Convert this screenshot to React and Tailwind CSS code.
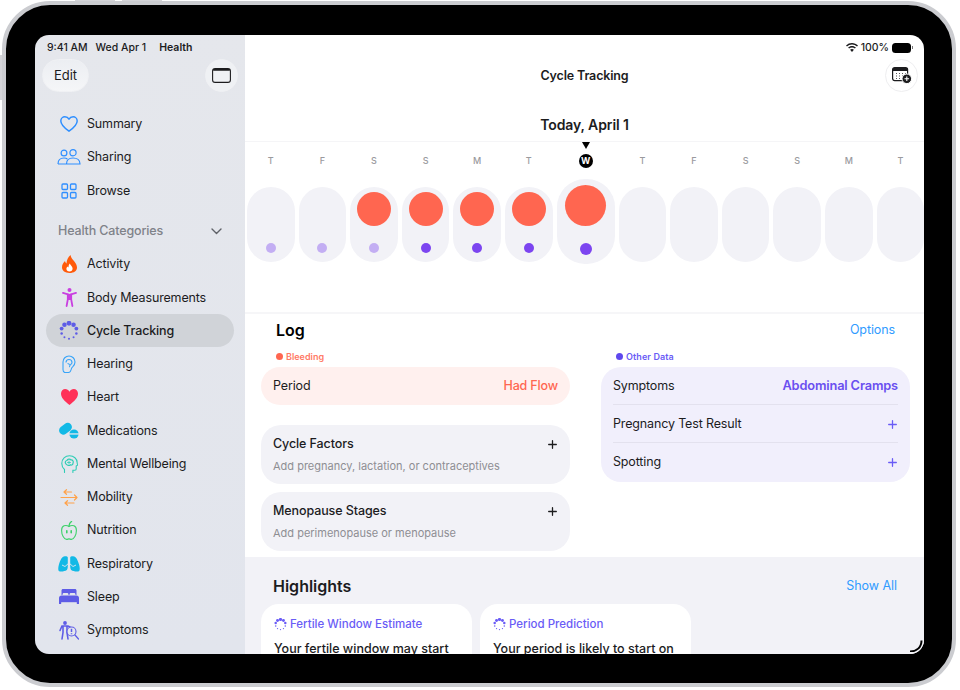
const days = [
  { l: "T", dot: "light" },
  { l: "F", dot: "light" },
  { l: "S", dot: "light", flow: true },
  { l: "S", dot: "dark", flow: true },
  { l: "M", dot: "dark", flow: true },
  { l: "T", dot: "dark", flow: true },
  { l: "W", dot: "dark", flow: true, today: true },
  { l: "T" },
  { l: "F" },
  { l: "S" },
  { l: "S" },
  { l: "M" },
  { l: "T" },
];

function Spinner({ size = 20, color = "#6a5cf6" }) {
  // big dots on top, small ticks on the bottom
  const dots = [
    [0, 2.9], [36, 2.7], [72, 2.3], [108, 1.5], [144, 1.2],
    [180, 1.2], [216, 1.2], [252, 1.5], [288, 2.3], [324, 2.7],
  ];
  return (
    <svg width={size} height={size} viewBox="0 0 24 24" fill={color}>
      {dots.map(([a, r]) => (
        <circle
          key={a}
          cx={12 + 9.3 * Math.sin((a * Math.PI) / 180)}
          cy={12 - 9.3 * Math.cos((a * Math.PI) / 180)}
          r={r}
        />
      ))}
    </svg>
  );
}

const HeartPath = "M12 21C6 16.6 2 13 2 8.2 2 5 4.4 3 7 3c2 0 3.9 1 5 3 1.1-2 3-3 5-3 2.600 0 5 2 5 5.200C22 13 18 16.6 12 21Z";

const icons = {
  summary: (
    <svg width="18" height="16" viewBox="1 2 22 20" fill="none" stroke="#2f8fff" strokeWidth="1.8" strokeLinejoin="round" preserveAspectRatio="none">
      <path d={HeartPath} />
    </svg>
  ),
  sharing: (
    <svg width="24" height="16" viewBox="0 0 24 16" fill="none" stroke="#2f8fff" strokeWidth="1.2">
      <circle cx="7" cy="4" r="2.9" />
      <circle cx="16" cy="3.7" r="3.1" />
      <path d="M1 15c0-4 2.500-6 6-6 1.400 0 2.500.3 3.400 1" />
      <path d="M1 15h8.500M9.500 15c0-3.800 2.500-6 6.500-6s7 2.200 7 6Z" />
    </svg>
  ),
  browse: (
    <svg width="16" height="16" viewBox="0 0 16 16" fill="none" stroke="#2f8fff" strokeWidth="1.3">
      <rect x="1" y="1" width="5.5" height="5.5" rx="1" />
      <rect x="9.5" y="1" width="5.5" height="5.5" rx="1" />
      <rect x="1" y="9.5" width="5.5" height="5.5" rx="1" />
      <rect x="9.5" y="9.5" width="5.5" height="5.5" rx="1" />
    </svg>
  ),
  activity: (
    <svg width="15" height="18" viewBox="0 0 15 18">
      <path d="M8.500 0c.6 3 2 4 3.500 6 1.500 2 3 4 3 6.500C15 15.800 12 18 7.500 18S0 15.800 0 12.300C0 9.500 1.500 7.500 3 6c.2 1 .6 1.800 1.500 2.500C4.700 5 6 2 8.500 0Z" fill="#ff5a0a" />
      <path d="M7.700 8.500c.4 1.500 2.900 2.600 2.900 5.100 0 1.900-1.300 3-3.100 3s-3.100-1.100-3.100-2.800c0-1 .6-1.800 1.200-2.400.2.500.4.800.8 1 .1-1.500.5-2.800 1.300-3.900Z" fill="#fff" />
    </svg>
  ),
  body: (
    <svg width="15" height="19" viewBox="0 0 15 19" fill="none" stroke="#c93fe0" strokeLinecap="round">
      <circle cx="7.5" cy="2" r="2" fill="#c93fe0" stroke="none" />
      <path d="M1 4.800 7.500 6.800l6.500-2" strokeWidth="1.8" />
      <path d="M5.800 6.500v5L4.600 18M9.200 6.500v5l1.200 6.500" strokeWidth="1.8" />
      <path d="M6 7h3v4.500H6Z" fill="#c93fe0" strokeWidth="1" />
    </svg>
  ),
  cycle: <Spinner size={20} color="#5e5ce6" />,
  hearing: (
    <svg width="14" height="18" viewBox="0 0 14 18" fill="none" stroke="#38a4f8" strokeWidth="1.1">
      <path d="M2.500 17.300C1.500 17 1 16 1 14.500V7a6 6 0 0 1 12 0c0 2.200-1 3.500-2.200 4.700-1.200 1.100-1.500 2-1.800 3.300-.4 1.600-1.200 2.500-2.500 2.500H2.500Z" />
      <path d="M4 7.500a3 3 0 1 1 6 0c0 1.500-1.300 1.800-2 2.800-.4.600-.3 1.400-.8 1.700" />
      <path d="M5.500 8.500c1 0 1.800.5 2 1.500" />
    </svg>
  ),
  heart: (
    <svg width="17" height="16" viewBox="2 3 20 18" fill="#ff3158" preserveAspectRatio="none">
      <path d={HeartPath} />
    </svg>
  ),
  meds: (
    <svg width="20" height="17" viewBox="0 0 20 17">
      <rect x="-.5" y="2.500" width="14" height="8.500" rx="4.250" fill="#12b9e6" transform="rotate(-38 6.500 6.750)" />
      <circle cx="15" cy="12" r="4.600" fill="#12b9e6" />
      <rect x="10" y="11.300" width="10" height="1.300" fill="#e4e7ed" />
    </svg>
  ),
  mental: (
    <svg width="17" height="18" viewBox="0 0 17 18" fill="none" stroke="#2fcdb6" strokeWidth="1.1" strokeLinecap="round">
      <path d="M3.500 17.500v-3C1.800 13 .8 11 .8 8.500.8 3.700 4.300.8 8.500.8c4.200 0 7.700 2.800 7.700 7 0 1 .1 1.500.5 2.200l-1.500 1v3c0 .8-.5 1.200-1.300 1.200h-2v2.300" />
      <path d="M5 9c-1.500-1.500-.5-3.500 1-3.500C6.500 4 9 3.500 10 5c1.500-.3 3 1.500 2 3 .3 1.500-1.500 2.500-2.500 1.800C8.500 11 6 10.500 5 9Z" strokeWidth="1.2" />
      <path d="M6.500 7.500h3M8 6v3" strokeWidth=".8" />
    </svg>
  ),
  mobility: (
    <svg width="18" height="17" viewBox="0 0 18 17" fill="none" stroke="#ffa24a" strokeWidth="1.2" strokeLinecap="round" strokeLinejoin="round">
      <path d="M4 3h7.500M6.500 .7 4 3l2.500 2.300" />
      <path d="M1 8.500h16M14.500 6l2.500 2.500-2.500 2.500" />
      <path d="M5 14h9M7.500 11.700 5 14l2.500 2.300" />
    </svg>
  ),
  nutrition: (
    <svg width="16" height="19" viewBox="0 0 16 19" fill="none" stroke="#3dd16a" strokeWidth="1.1">
      <path d="M8 5.500C6.500 4.500 4.500 4.200 3 4.800 1.300 5.500.6 7.200.6 9.500c0 4.300 2.400 8.900 5 8.900 1 0 1.600-.5 2.400-.5s1.400.5 2.400.5c2.600 0 5-4.600 5-8.900 0-2.300-.7-4-2.400-4.700-1.500-.6-3.500-.3-5 .7Z" />
      <path d="M8 5c0-2 1-3.500 2.500-4.500" strokeWidth="1.4" strokeLinecap="round" />
      <rect x="5" y="9" width="1.6" height="3.5" rx=".8" fill="#3dd16a" stroke="none" />
      <rect x="9.4" y="9" width="1.6" height="3.5" rx=".8" fill="#3dd16a" stroke="none" />
    </svg>
  ),
  respiratory: (
    <svg width="22" height="16" viewBox="0 0 22 16">
      <path d="M6 .5C3.500 1 2 5 .8 9 .2 11.500 0 14 .8 15c1.500 1 6 .5 8-1 1-1 1-3 1-5.500V1.500C9.800 .5 7.500 0 6 .5Z" fill="#12b9e6" />
      <path d="M16 .5c2.500.5 4 4.500 5.200 8.500.6 2.500.8 5 0 6-1.500 1-6 .5-8-1-1-1-1-3-1-5.500V1.500c0-1 2.300-1.500 3.800-1Z" fill="#12b9e6" />
      <path d="M11 0v7M11 7 7 10.500M11 7l4 3.500M4 9l3 1.500M18 9l-3 1.500" stroke="#e4e7ed" strokeWidth=".9" fill="none" />
    </svg>
  ),
  sleep: (
    <svg width="20" height="15" viewBox="0 0 20 15" fill="#5e5ce6">
      <path d="M2.500 1.500C2.500.7 3.200 0 4 0h12c.8 0 1.500.7 1.500 1.500V6h-1c0-1.500-.5-2-1.500-2h-3c-1 0-1.500.5-1.500 2h-1C9.500 4.500 9 4 8 4H5c-1 0-1.500.5-1.500 2h-1Z" />
      <path d="M2.500 6.500h15C19 6.500 20 7.500 20 9v3H0V9c0-1.500 1-2.500 2.500-2.500Z" />
      <rect x="0" y="12" width="2.2" height="3" rx=".5" />
      <rect x="17.800" y="12" width="2.2" height="3" rx=".5" />
      <rect x="0" y="12" width="20" height="1.2" />
    </svg>
  ),
  symptoms: (
    <svg width="20" height="19" viewBox="0 0 20 19" fill="none" stroke="#5e5ce6">
      <circle cx="6" cy="2" r="1.900" fill="#5e5ce6" stroke="none" />
      <path d="M1 9.500 3 5h6l2 1M4 5v6.500L3 18M8 5v6.500L9 18" strokeWidth="1.6" strokeLinecap="round" />
      <circle cx="12.5" cy="10.5" r="4.5" fill="#e4e7ed" strokeWidth="1.1" />
      <path d="M12.500 7.800v3.200M12.500 12.200v1" strokeWidth="1.5" />
      <path d="m16 14 3.500 4" strokeWidth="1.2" strokeLinecap="round" />
    </svg>
  ),
};

const topNav = [
  { name: "Summary", icon: "summary" },
  { name: "Sharing", icon: "sharing" },
  { name: "Browse", icon: "browse" },
];

const categories = [
  { name: "Activity", icon: "activity" },
  { name: "Body Measurements", icon: "body" },
  { name: "Cycle Tracking", icon: "cycle", active: true },
  { name: "Hearing", icon: "hearing" },
  { name: "Heart", icon: "heart" },
  { name: "Medications", icon: "meds" },
  { name: "Mental Wellbeing", icon: "mental" },
  { name: "Mobility", icon: "mobility" },
  { name: "Nutrition", icon: "nutrition" },
  { name: "Respiratory", icon: "respiratory" },
  { name: "Sleep", icon: "sleep" },
  { name: "Symptoms", icon: "symptoms" },
];

function NavItem({ item }) {
  return (
    <div
      className={`flex h-[33.27px] shrink-0 items-center gap-[6px] rounded-full pl-[11px] text-[12.5px] tracking-[-0.15px] text-[#1c1c1e] ${
        item.active ? "bg-[#d0d3d8] font-medium" : ""
      }`}
    >
      <span className="flex w-[24px] shrink-0 items-center justify-center">
        {icons[item.icon]}
      </span>
      <span className="pt-px">{item.name}</span>
    </div>
  );
}

function Sidebar() {
  return (
    <aside className="flex w-[210px] shrink-0 flex-col bg-gradient-to-b from-[#e5e7ec] to-[#e2e5ed] px-[11px]">
      <div className="-mx-[11px] flex h-[24px] shrink-0 items-center pl-[12px] pt-px text-[10.5px] font-medium text-[#1c1c1e]">
        <span>9:41 AM</span>
        <span className="ml-[8px]">Wed Apr 1</span>
        <span className="ml-[13px] font-semibold">Health</span>
      </div>

      <div className="-mx-[4px] flex h-[33px] shrink-0 items-center justify-between">
        <div className="flex h-[33px] w-[47px] items-center justify-center rounded-full border border-[#f0f1f4] bg-gradient-to-b from-[#eceef2] to-[#f5f6f8] text-[13px] text-[#1c1c1e]">
          Edit
        </div>
        <div className="flex h-[33px] w-[33px] items-center justify-center rounded-full border border-[#f0f1f4] bg-[#eff1f4]">
          <svg width="19" height="15" viewBox="0 0 19 15" fill="none">
            <rect x=".6" y=".6" width="17.8" height="13.8" rx="2.5" stroke="#1c1c1e" strokeWidth="1.1" />
            <rect x="1" y="1" width="17" height="1.8" rx=".8" fill="#1c1c1e" />
          </svg>
        </div>
      </div>

      <nav className="mt-[15.4px] flex flex-col">
        {topNav.map((item) => (
          <NavItem key={item.name} item={item} />
        ))}
      </nav>

      <div className="mt-[7.4px] flex h-[33px] shrink-0 items-center justify-between pl-[12px] pr-[12px] text-[12.5px] font-medium tracking-[-0.15px] text-[#7f8289]">
        Health Categories
        <svg width="11" height="7" viewBox="0 0 11 7" fill="none" stroke="#5f6268" strokeWidth="1.4" strokeLinecap="round" strokeLinejoin="round">
          <path d="m1 1 4.500 4.500L10 1" />
        </svg>
      </div>

      <nav className="flex flex-col">
        {categories.map((item) => (
          <NavItem key={item.name} item={item} />
        ))}
      </nav>
    </aside>
  );
}

function DayColumn({ day }) {
  const isToday = day.today;
  return (
    <div className={`flex shrink-0 flex-col items-center ${isToday ? "w-[58px]" : "w-[47.6px]"}`}>
      <div className="flex h-[12px] items-start justify-center">
        {isToday && <div className="h-0 w-0 border-x-[4.5px] border-t-[7px] border-x-transparent border-t-black" />}
      </div>
      {isToday ? (
        <div className="flex h-[14px] w-[14px] items-center justify-center rounded-full bg-black text-[9px] font-bold text-white">
          {day.l}
        </div>
      ) : (
        <div className="flex h-[14px] items-center text-[9px] font-medium text-[#9a9a9e]">{day.l}</div>
      )}
      <div
        className={`flex w-full flex-col items-center bg-[#f2f2f7] ${
          isToday ? "mt-[11px] h-[85px] rounded-[28px]" : "mt-[19px] h-[75px] rounded-[24px]"
        }`}
      >
        <div className={isToday ? "mt-[6px] h-[41px]" : "mt-[5px] h-[34px]"}>
          {day.flow && (
            <div className={`rounded-full bg-[#ff6650] ${isToday ? "h-[41px] w-[41px]" : "h-[34px] w-[34px]"}`} />
          )}
        </div>
        {day.dot && (
          <div
            className={`mt-[17px] rounded-full ${day.dot === "dark" ? "bg-[#7c45f0]" : "bg-[#c3aef3]"} ${
              isToday ? "h-[12px] w-[12px]" : "h-[10px] w-[10px]"
            }`}
          />
        )}
      </div>
    </div>
  );
}

function Plus({ color }) {
  return (
    <svg width="9" height="9" viewBox="0 0 9 9" stroke={color} strokeWidth="1.3" strokeLinecap="round">
      <path d="M4.500 .7v7.600M.7 4.500h7.600" />
    </svg>
  );
}

function FactorCard({ title, sub }) {
  return (
    <div className="flex h-[59px] flex-col rounded-[20px] bg-[#f2f2f7] px-[12px] pt-[9px]">
      <div className="flex items-center justify-between pr-[1px] text-[12.5px] font-medium leading-[20px] tracking-[-0.1px] text-[#1c1c1e]">
        {title}
        <Plus color="#1c1c1e" />
      </div>
      <div className="mt-[4px] text-[11px] leading-[16px] text-[#8e8e93]">{sub}</div>
    </div>
  );
}

function HighlightCard({ title, body }) {
  return (
    <div className="h-[70px] w-[211px] rounded-[18px] bg-white px-[13px] pt-[12px]">
      <div className="flex items-center gap-[3px] text-[11.5px] font-medium text-[#6a5cf6]">
        <Spinner size={13} />
        {title}
      </div>
      <div className="mt-[7px] whitespace-nowrap text-[12.5px] font-medium text-[#1c1c1e]">{body}</div>
    </div>
  );
}

function Main() {
  return (
    <main className="relative flex min-w-0 flex-1 flex-col overflow-hidden bg-white">
      {/* status bar */}
      <div className="flex h-[24px] shrink-0 items-center justify-end gap-[3px] pr-[11px] pt-px text-[10.5px] font-medium text-[#1c1c1e]">
        <svg width="12" height="9" viewBox="0 0 12 9" fill="#1c1c1e">
          <path d="M6 0c2.300 0 4.400.9 6 2.400l-1 1.100A7.200 7.200 0 0 0 6 1.500c-1.900 0-3.700.8-5 2L0 2.400A8.700 8.700 0 0 1 6 0Z" />
          <path d="M6 3c1.500 0 2.900.6 3.900 1.500l-1 1.100A4.300 4.300 0 0 0 6 4.500c-1.100 0-2.100.4-2.900 1.100l-1-1.100C3.100 3.600 4.500 3 6 3Z" />
          <path d="M6 6c.8 0 1.400.3 1.900.7L6 9 4.100 6.700C4.600 6.300 5.200 6 6 6Z" />
        </svg>
        <span>100%</span>
        <div className="flex items-center gap-[1px]">
          <div className="h-[10px] w-[19px] rounded-[3.5px] bg-black" />
          <div className="h-[3px] w-[1px] bg-[#777]" />
        </div>
      </div>

      {/* title bar */}
      <div className="relative flex h-[33px] shrink-0 items-center justify-center pt-px">
        <span className="text-[12.5px] font-semibold tracking-[-0.15px] text-[#1c1c1e]">Cycle Tracking</span>
        <div className="absolute right-[6px] top-0 flex h-[33px] w-[33px] items-center justify-center rounded-full border border-[#eeeef0] bg-white">
          <svg width="20" height="17" viewBox="0 0 20 17" fill="none">
            <rect x=".6" y=".6" width="15" height="13" rx="2" stroke="#1c1c1e" strokeWidth="1.2" />
            <rect x="1" y="1" width="14.5" height="3" fill="#1c1c1e" />
            <path d="M4 6.500h1M7 6.500h1M10 6.500h1M13 6.500h1M4 9h1M7 9h1M10 9h1M4 11.500h1M7 11.500h1" stroke="#555" strokeWidth="1.1" />
            <circle cx="14.8" cy="11.8" r="4.8" fill="#1c1c1e" stroke="#fff" strokeWidth="1" />
            <path d="M14.800 9.500v4.600M12.500 11.800h4.600" stroke="#fff" strokeWidth="1.1" />
          </svg>
        </div>
      </div>

      <div className="mt-[16px] flex h-[33px] shrink-0 items-center justify-center text-[14px] font-semibold tracking-[-0.1px] text-[#1c1c1e]">
        Today, April 1
      </div>
      <div className="h-px shrink-0 bg-[#f5f5f7]" />

      {/* calendar strip */}
      <div className="flex h-[170px] shrink-0 gap-[4px] overflow-hidden pl-[2px]">
        {days.map((day, i) => (
          <DayColumn key={i} day={day} />
        ))}
      </div>

      {/* log */}
      <section className="shrink-0 border-t-2 border-[#f6f6f8] pl-[16px] pr-[14px]">
        <div className="flex h-[32px] items-center justify-between pl-[15px] pr-[15px]">
          <h2 className="text-[16px] font-semibold text-black">Log</h2>
          <span className="pt-px text-[12.5px] tracking-[-0.1px] text-[#2f9bff]">Options</span>
        </div>

        <div className="grid grid-cols-[309px_309px] gap-x-[31px]">
          <div>
            <div className="flex h-[21px] items-center gap-[3px] pl-[15px] text-[9px] font-semibold text-[#ff7a66]">
              <span className="h-[7px] w-[7px] rounded-full bg-[#ff6650]" />
              Bleeding
            </div>
            <div className="flex h-[38px] items-center justify-between rounded-[19px] bg-[#fff0ee] px-[12px] pt-px text-[12.5px] tracking-[-0.15px]">
              <span className="text-[#1c1c1e]">Period</span>
              <span className="font-medium text-[#ff6650]">Had Flow</span>
            </div>
            <div className="mt-[20px] flex flex-col gap-[8px]">
              <FactorCard title="Cycle Factors" sub="Add pregnancy, lactation, or contraceptives" />
              <FactorCard title="Menopause Stages" sub="Add perimenopause or menopause" />
            </div>
          </div>

          <div>
            <div className="flex h-[21px] items-center gap-[3px] pl-[15px] text-[9px] font-semibold tracking-[0.1px] text-[#6a5cf6]">
              <span className="h-[7px] w-[7px] rounded-full bg-[#5f48ee]" />
              Other Data
            </div>
            <div className="rounded-[20px] bg-[#f1effc] px-[12px] text-[12.5px] tracking-[-0.15px] text-[#1c1c1e]">
              <div className="flex h-[38px] items-center justify-between border-b border-[#e3e1ee] pt-px">
                <span>Symptoms</span>
                <span className="text-[12.8px] font-semibold text-[#6a4ff0]">Abdominal Cramps</span>
              </div>
              <div className="flex h-[38px] items-center justify-between border-b border-[#e3e1ee] pr-[1px] pt-[2px]">
                <span>Pregnancy Test Result</span>
                <Plus color="#6a5cf6" />
              </div>
              <div className="flex h-[38.5px] items-center justify-between pr-[1px] pt-px">
                <span>Spotting</span>
                <Plus color="#6a5cf6" />
              </div>
            </div>
          </div>
        </div>
      </section>

      {/* highlights */}
      <section className="mt-[6px] flex-1 bg-[#f2f2f7] pl-[16px] pr-[27px] pt-[14px]">
        <div className="flex h-[30px] items-center justify-between pl-[12px]">
          <h2 className="text-[16px] font-semibold text-[#1c1c1e]">Highlights</h2>
          <span className="pt-px text-[12.5px] tracking-[-0.05px] text-[#2f9bff]">Show All</span>
        </div>
        <div className="mt-[3px] flex gap-[8px]">
          <HighlightCard title="Fertile Window Estimate" body="Your fertile window may start" />
          <HighlightCard title="Period Prediction" body="Your period is likely to start on" />
        </div>
      </section>

      {/* corner grabber */}
      <svg className="absolute bottom-[2px] right-[1px]" width="13" height="12" viewBox="0 0 13 12" fill="none" stroke="#000" strokeWidth="2">
        <path d="M0 11.500c6.500 0 11.500-4 11.500-11" />
      </svg>
    </main>
  );
}

export default function App() {
  return (
    <div className="relative h-[690px] w-[960px] overflow-hidden bg-white [font-family:Inter,sans-serif]">
      {/* hardware buttons */}
      <div className="absolute left-[75px] top-0 h-[2px] w-[40px] bg-[#d4d4d8]" />
      <div className="absolute left-[122px] top-0 h-[2px] w-[40px] bg-[#d4d4d8]" />
      <div className="absolute left-0 top-[55px] h-[45px] w-[3px] bg-[#d4d4d8]" />

      <div className="relative ml-[2px] mt-[1px] h-[686px] w-[954px] rounded-[48px] border-[4px] border-[#cbccd0] bg-black pl-[29px] pt-[30px]">
        <div className="flex h-[619px] w-[889px] overflow-hidden rounded-[14px]">
          <Sidebar />
          <Main />
        </div>
      </div>
    </div>
  );
}
